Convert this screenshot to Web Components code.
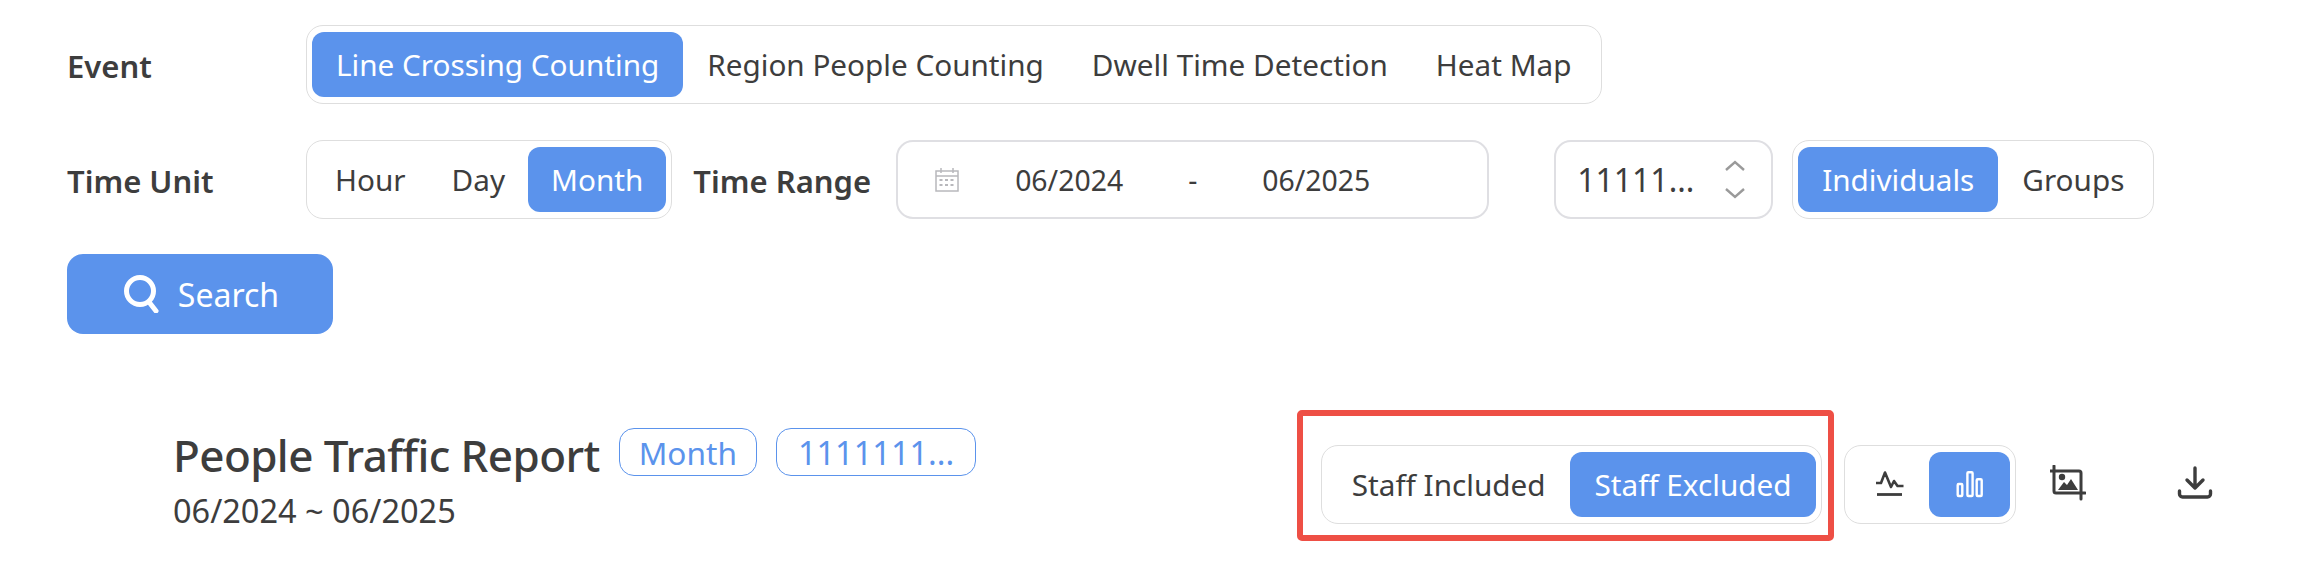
<!DOCTYPE html>
<html lang="en">
<head>
<meta charset="utf-8">
<title>People Traffic Report</title>
<style>
  html, body { margin: 0; background: #fff; }
  body {
    font-family: "Noto Sans", "Open Sans", sans-serif;
    color: #3d3d3d;
    font-size: 29.7px;
  }
</style>
</head>
<body>
<traffic-page>
  <filter-row>
    <field-label wide>Event</field-label>
    <seg-group style="--seg-pad:24px">
      <seg-item active>Line Crossing Counting</seg-item>
      <seg-item>Region People Counting</seg-item>
      <seg-item>Dwell Time Detection</seg-item>
      <seg-item>Heat Map</seg-item>
    </seg-group>
  </filter-row>
  <filter-row>
    <field-label wide>Time Unit</field-label>
    <seg-group style="--seg-pad:23px">
      <seg-item>Hour</seg-item>
      <seg-item>Day</seg-item>
      <seg-item active>Month</seg-item>
    </seg-group>
    <field-label style="margin-left:21px">Time Range</field-label>
    <date-range start="06/2024" end="06/2025"></date-range>
    <num-select>11111...</num-select>
    <seg-group style="--seg-pad:24px">
      <seg-item active>Individuals</seg-item>
      <seg-item>Groups</seg-item>
    </seg-group>
  </filter-row>
  <search-button>Search</search-button>
  <report-header></report-header>
</traffic-page>

<script>
const ICONS = {
  search: `<svg width="36" height="38" viewBox="0 0 36 38" fill="none" stroke="#fff" stroke-width="5" stroke-linecap="round"><circle cx="17" cy="16" r="13.5"/><path d="M26 27l7 9"/></svg>`,
  calendar: `<svg width="24" height="24" viewBox="0 0 24 24" fill="none" stroke="#b8b8bc" stroke-width="1.5"><rect x="1" y="3" width="22" height="20"/><path d="M1 8h22M6 0v5M18 0v5"/><path d="M4.5 12h4M10 12h4M15.5 12h4M4.5 17h4M10 17h4M15.5 17h4" stroke-width="2" stroke-dasharray="3 1"/></svg>`,
  pulse: `<svg width="28" height="28" viewBox="0 0 28 28" fill="none" stroke="#3d3d3d" stroke-width="2.6" stroke-linejoin="round"><path d="M0 13h5l4-10.500 6 14.500 3-6 3.500 5h6"/><path d="M1 24.500h25" stroke-width="2.800"/></svg>`,
  bars: `<svg width="28" height="28" viewBox="0 0 28 28" fill="none" stroke="#fff" stroke-width="2.4"><rect x="1.700" y="14" width="4.600" height="12" rx="1"/><rect x="11.400" y="2.200" width="5.200" height="23.800" rx="1"/><rect x="20.700" y="9.200" width="5" height="16.800" rx="1"/></svg>`,
  crop: `<svg width="36" height="36" viewBox="0 0 36 36" fill="none"><path d="M4 1v25a2 2 0 0 0 2 2h29M0 6h29a2 2 0 0 1 2 2v26" stroke="#3d3d3d" stroke-width="3" stroke-linecap="round"/><circle cx="12" cy="12" r="3.200" fill="#3d3d3d"/><path d="M8 25l6-8 3 3 4-6 7 11z" fill="#3d3d3d"/></svg>`,
  download: `<svg width="36" height="36" viewBox="0 0 36 36" fill="none" stroke="#3d3d3d" stroke-width="3.400" stroke-linecap="round" stroke-linejoin="round"><path d="M18 3v20M10 15l8 8 8-8"/><path d="M2.500 26v3a3 3 0 0 0 3 3h25a3 3 0 0 0 3-3v-3"/></svg>`,
};

class TrafficPage extends HTMLElement {
  constructor() {
    super();
    this.attachShadow({ mode: "open" });
    this.shadowRoot.innerHTML = `
      <style>
        :host { display: flex; flex-direction: column; padding: 25px 0 0 67px; height: 547px; overflow: hidden; }
      </style>
      <slot></slot>`;
  }
}

class FilterRow extends HTMLElement {
  constructor() {
    super();
    this.attachShadow({ mode: "open" });
    this.shadowRoot.innerHTML = `
      <style>
        :host { display: flex; align-items: center; height: 79px; margin-bottom: 36px; }
        :host(:nth-of-type(2)) { margin-bottom: 35px; }
      </style>
      <slot></slot>`;
  }
}

class FieldLabel extends HTMLElement {
  constructor() {
    super();
    this.attachShadow({ mode: "open" });
    this.shadowRoot.innerHTML = `
      <style>
        :host { display: block; font-size: 31px; font-weight: 600; margin-right: 25px; white-space: nowrap; line-height: 1; padding-top: 3px; }
        :host([wide]) { width: 239px; margin-right: 0; flex: none; }
      </style>
      <slot></slot>`;
  }
}

class SegGroup extends HTMLElement {
  constructor() {
    super();
    this.attachShadow({ mode: "open" });
    this.shadowRoot.innerHTML = `
      <style>
        :host {
          display: flex; box-sizing: border-box; height: 79px; padding: 6px 5px;
          border: 1px solid #dedede; border-radius: 17px; background: #fff; flex: none;
        }
      </style>
      <slot></slot>`;
  }
}

class SegItem extends HTMLElement {
  constructor() {
    super();
    this.attachShadow({ mode: "open" });
    this.shadowRoot.innerHTML = `
      <style>
        :host {
          display: flex; align-items: center; justify-content: center;
          padding: 0 var(--seg-pad, 24px); border-radius: 12px; white-space: nowrap; color: #3d3d3d;
        }
        :host([active]) { background: #5b93ec; color: #fff; }
      </style>
      <slot></slot>`;
  }
}

class DateRange extends HTMLElement {
  constructor() {
    super();
    this.attachShadow({ mode: "open" });
    const start = this.getAttribute("start");
    const end = this.getAttribute("end");
    this.shadowRoot.innerHTML = `
      <style>
        :host {
          display: flex; align-items: center; box-sizing: border-box; width: 593px; height: 79px;
          padding-left: 37px; border: 2px solid #dfdfe3; border-radius: 17px; flex: none;
          font-size: 28.4px; margin-right: 65px;
        }
        span { white-space: nowrap; }
        .icon { display: flex; margin-right: 56px; }
        .sep { margin: 0 65px; }
      </style>
      <span class="icon">${ICONS.calendar}</span>
      <span>${start}</span><span class="sep">-</span><span>${end}</span>`;
  }
}

class NumSelect extends HTMLElement {
  constructor() {
    super();
    this.attachShadow({ mode: "open" });
    this.shadowRoot.innerHTML = `
      <style>
        :host {
          display: flex; align-items: center; justify-content: space-between; box-sizing: border-box;
          width: 219px; height: 79px; padding: 0 26px 0 21px; border: 2px solid #dfdfe3;
          border-radius: 17px; flex: none; margin-right: 19px; white-space: nowrap; font-size: 32px;
        }
        .arrows { display: flex; flex-direction: column; gap: 17px; }
        svg { display: block; }
      </style>
      <slot></slot>
      <span class="arrows">
        <svg width="20" height="11" viewBox="0 0 20 11" fill="none" stroke="#9a9a9a" stroke-width="2.4"><path d="M1 10l9-8 9 8"/></svg>
        <svg width="20" height="11" viewBox="0 0 20 11" fill="none" stroke="#9a9a9a" stroke-width="2.4"><path d="M1 1l9 8 9-8"/></svg>
      </span>`;
  }
}

class SearchButton extends HTMLElement {
  constructor() {
    super();
    this.attachShadow({ mode: "open" });
    this.shadowRoot.innerHTML = `
      <style>
        :host {
          display: flex; align-items: center; justify-content: center; gap: 19px; box-sizing: border-box;
          width: 266px; height: 80px; padding-left: 2px; border-radius: 16px; background: #5b93ec; color: #fff; font-size: 32px;
        }
        span { display: flex; }
      </style>
      <span>${ICONS.search}</span><slot></slot>`;
  }
}

class TagChip extends HTMLElement {
  constructor() {
    super();
    this.attachShadow({ mode: "open" });
    this.shadowRoot.innerHTML = `
      <style>
        :host {
          display: flex; align-items: center; box-sizing: border-box; height: 48px; padding: 0 19px;
          border: 1px solid #5b93ec; border-radius: 15px; color: #5b93ec; white-space: nowrap;
          font-size: 31.6px;
        }
      </style>
      <slot></slot>`;
  }
}

class HighlightBox extends HTMLElement {
  constructor() {
    super();
    this.attachShadow({ mode: "open" });
    this.shadowRoot.innerHTML = `
      <style>
        :host {
          display: flex; align-items: center; box-sizing: border-box; height: 131px;
          padding: 17px 6px 0 18px; border: 6px solid #ee4f45; border-radius: 5px; flex: none;
        }
      </style>
      <slot></slot>`;
  }
}

class ReportHeader extends HTMLElement {
  constructor() {
    super();
    this.attachShadow({ mode: "open" });
    this.shadowRoot.innerHTML = `
      <style>
        :host {
          display: flex; justify-content: space-between; align-items: flex-start;
          margin: 76px 0 0 106px; width: 2085px;
        }
        .info { padding-top: 16px; }
        .title-line { display: flex; align-items: flex-start; gap: 19px; }
        tag-chip { margin-top: 2px; }
        h1 { margin: 0; padding-top: 4px; font-size: 44px; font-weight: 500; letter-spacing: -0.6px; line-height: 50px; white-space: nowrap; }
        .range { font-size: 32.5px; line-height: 36px; margin-top: 13px; }
        .tools { display: flex; align-items: center; }
        .chart { margin: 17px 0 0 10px; }
        .chart seg-item { padding: 0; width: 81px; }
        .chart seg-item:first-child { width: 79px; }
        .tool { display: flex; align-items: center; justify-content: center; width: 127px; margin-top: 15px; }
        .tool:first-of-type { margin-left: -12px; }
      </style>
      <div class="info">
        <div class="title-line">
          <h1>People Traffic Report</h1>
          <tag-chip>Month</tag-chip>
          <tag-chip style="font-size:32.5px;padding:0 21px">1111111...</tag-chip>
        </div>
        <div class="range">06/2024 ~ 06/2025</div>
      </div>
      <div class="tools">
        <highlight-box>
          <seg-group style="--seg-pad:24.5px">
            <seg-item>Staff Included</seg-item>
            <seg-item active>Staff Excluded</seg-item>
          </seg-group>
        </highlight-box>
        <seg-group class="chart">
          <seg-item>${ICONS.pulse}</seg-item>
          <seg-item active>${ICONS.bars}</seg-item>
        </seg-group>
        <span class="tool">${ICONS.crop}</span>
        <span class="tool">${ICONS.download}</span>
      </div>`;
  }
}

customElements.define("traffic-page", TrafficPage);
customElements.define("filter-row", FilterRow);
customElements.define("field-label", FieldLabel);
customElements.define("seg-group", SegGroup);
customElements.define("seg-item", SegItem);
customElements.define("date-range", DateRange);
customElements.define("num-select", NumSelect);
customElements.define("search-button", SearchButton);
customElements.define("tag-chip", TagChip);
customElements.define("highlight-box", HighlightBox);
customElements.define("report-header", ReportHeader);
</script>
</body>
</html>
